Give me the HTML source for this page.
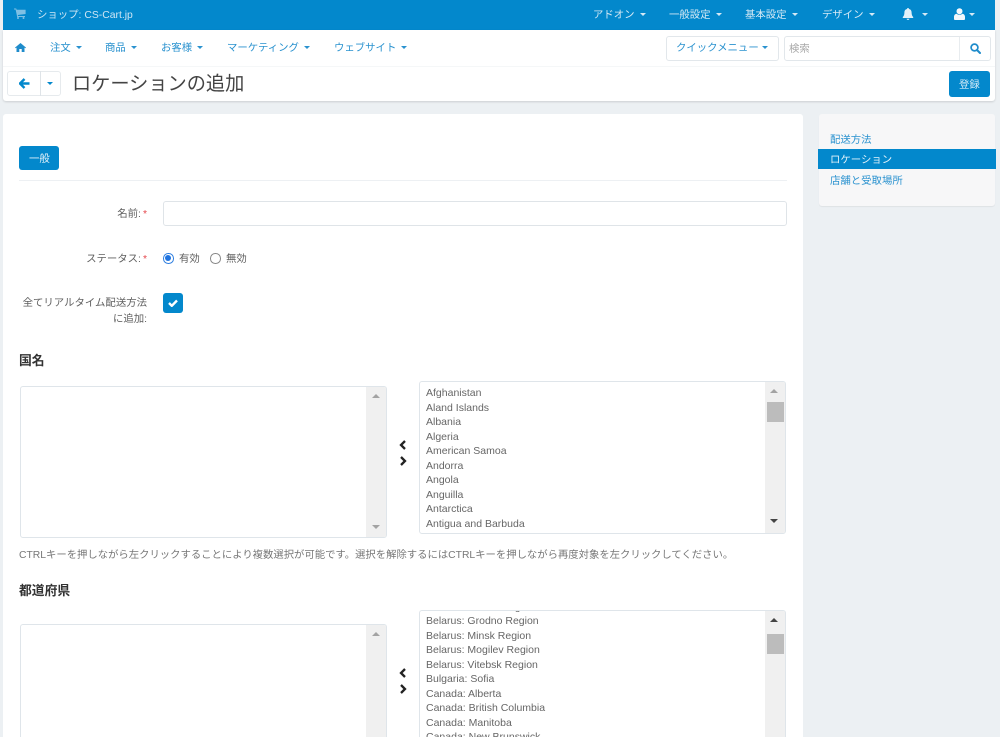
<!DOCTYPE html>
<html lang="ja">
<head>
<meta charset="utf-8">
<title>ロケーションの追加</title>
<style>
html,body{margin:0;padding:0;width:1000px;height:737px;overflow:hidden;background:#ecf0f3}
body{position:relative;font-family:"Liberation Sans","Noto Sans CJK JP",sans-serif;font-size:10.4px;color:#5f5f5f}
.a{position:absolute;white-space:nowrap;line-height:16px}
.box{position:absolute;box-sizing:border-box}
.top{color:#d5e9f5}
.nav{color:#2a92cf}
.car{display:inline-block;width:0;height:0;border-left:3px solid transparent;border-right:3px solid transparent;border-top:3px solid currentColor;vertical-align:2px;margin-left:5px}
.lab{text-align:right;color:#5f5f5f;right:853px}
.req{color:#e5484d;margin-left:2px}
.h{font-weight:bold;font-size:12.8px;color:#333}
.sel{position:absolute;box-sizing:border-box;background:#fff;border:1px solid #dfe5ea;border-radius:3px;overflow:hidden}
.sb{position:absolute;right:0;top:0;bottom:0;width:20px;background:#f0f0f0}
.opt{position:absolute;left:6px;line-height:14.5px;font-size:10.5px;color:#666;white-space:nowrap}
.tu,.td{position:absolute;width:0;height:0;border-left:4.5px solid transparent;border-right:4.5px solid transparent}
.tu{border-bottom:4.5px solid #a3a3a3}
.td{border-top:4.5px solid #a3a3a3}
.th{position:absolute;width:17px;height:20px;background:#bcbcbc}
svg{position:absolute;display:block}
</style>
</head>
<body>
<!-- top bar -->
<div class="box" style="left:3px;top:0;width:992px;height:30px;background:#0388cc"></div>
<svg style="left:14px;top:8px" width="12" height="11" viewBox="0 0 12 11"><path d="M0 0.5h2.2l.4 1.3h9v4.2l-7.8 1 .2 1h7v1H3.2L1.6 1.500H0z" fill="#7fc0e4"/><circle cx="4" cy="10" r="1" fill="#7fc0e4"/><circle cx="9.5" cy="10" r="1" fill="#7fc0e4"/></svg>
<div class="a top" style="left:37px;top:8px;color:#cfe6f4">ショップ: CS-Cart.jp</div>
<div class="a top" style="left:593px;top:8px">アドオン<span class="car"></span></div>
<div class="a top" style="left:669px;top:8px">一般設定<span class="car"></span></div>
<div class="a top" style="left:745px;top:8px">基本設定<span class="car"></span></div>
<div class="a top" style="left:822px;top:8px">デザイン<span class="car"></span></div>
<svg style="left:902px;top:8px" width="12" height="12" viewBox="0 0 12 12"><path d="M6 0c.6 0 1 .4 1 1 2 .4 2.600 2 2.600 3.600 0 2 .6 3.400 1.600 4.400v1H.8V9c1-1 1.600-2.400 1.600-4.400C2.400 3 3 1.400 5 1c0-.6.4-1 1-1zM4.600 10.800h2.800C7.300 11.500 6.700 12 6 12s-1.300-.5-1.400-1.200z" fill="#e3f1f9"/></svg>
<div class="a top" style="left:917px;top:8px"><span class="car"></span></div>
<svg style="left:954px;top:8px" width="11" height="12" viewBox="0 0 11 12"><circle cx="5.500" cy="3.200" r="3" fill="#f2f8fc"/><path d="M0 11V9c0-1.800 1-3 2.600-3.200.8.700 1.800 1 2.900 1s2.100-.3 2.900-1C10 6 11 7.200 11 9v2c0 .5-.4 1-1 1H1c-.6 0-1-.5-1-1z" fill="#f2f8fc"/></svg>
<div class="a top" style="left:964px;top:8px"><span class="car"></span></div>

<!-- nav panel -->
<div class="box" style="left:3px;top:30px;width:992px;height:71px;background:#fff;border-radius:0 0 3px 3px;box-shadow:0 1px 2px rgba(0,0,0,.14)"></div>
<div class="box" style="left:3px;top:66px;width:992px;height:1px;background:#f5f7f8"></div>
<svg style="left:15px;top:43px" width="11" height="9" viewBox="0 0 11 9"><path d="M5.500 0L11 4.600l-.6.700-.9-.7V9H6.700V6H4.300v3H1.500V4.600l-.9.700L0 4.600 5.500 0z" fill="#1f8ccb"/></svg>
<div class="a nav" style="left:50px;top:41px">注文<span class="car"></span></div>
<div class="a nav" style="left:105px;top:41px">商品<span class="car"></span></div>
<div class="a nav" style="left:161px;top:41px">お客様<span class="car"></span></div>
<div class="a nav" style="left:227px;top:41px">マーケティング<span class="car"></span></div>
<div class="a nav" style="left:334px;top:41px">ウェブサイト<span class="car"></span></div>

<div class="box" style="left:666px;top:36px;width:113px;height:25px;border:1px solid #e2e7eb;border-radius:3px"></div>
<div class="a nav" style="left:676px;top:41px">クイックメニュー<span class="car" style="margin-left:3px;border-left-width:3px;border-right-width:3px;border-top-width:3.500px"></span></div>
<div class="box" style="left:784px;top:36px;width:207px;height:25px;border:1px solid #e2e7eb;border-radius:3px"></div>
<div class="box" style="left:959px;top:37px;width:1px;height:23px;background:#e8ecef"></div>
<div class="a" style="left:789px;top:42px;color:#a8a8a8;font-size:10.4px">検索</div>
<svg style="left:970px;top:43px" width="11" height="11" viewBox="0 0 11 11"><circle cx="4.500" cy="4.500" r="3.400" fill="none" stroke="#1f8ccb" stroke-width="1.700"/><path d="M7 7l3 3" stroke="#1f8ccb" stroke-width="2" stroke-linecap="round"/></svg>

<!-- title row -->
<div class="box" style="left:7px;top:71px;width:54px;height:25px;border:1px solid #e6eaed;border-radius:3px"></div>
<div class="box" style="left:40px;top:71px;width:1px;height:25px;background:#dfe4e8"></div>
<svg style="left:19px;top:78px" width="11" height="11" viewBox="0 0 11 11"><path d="M5.500 1L1 5.500 5.500 10M1.500 5.500H10.500" fill="none" stroke="#0388cc" stroke-width="2.400"/></svg>
<div class="box" style="left:47px;top:82px;width:0;height:0;border-left:3px solid transparent;border-right:3px solid transparent;border-top:3px solid #0388cc"></div>
<div class="a" style="left:72px;top:72px;font-size:19.2px;line-height:26px;color:#444">ロケーションの追加</div>
<div class="box" style="left:949px;top:71px;width:41px;height:26px;background:#0388cc;border-radius:3px"></div>
<div class="a" style="left:959px;top:78px;color:#d8edf8">登録</div>

<!-- main panel -->
<div class="box" style="left:3px;top:114px;width:800px;height:623px;background:#fff;border-radius:3px 3px 0 0"></div>
<div class="box" style="left:19px;top:146px;width:40px;height:24px;background:#0388cc;border-radius:3px"></div>
<div class="a" style="left:29px;top:152px;color:#e3f2fa">一般</div>
<div class="box" style="left:19px;top:180px;width:768px;height:1px;background:#edf0f3"></div>

<div class="a lab" style="top:207px">名前:<span class="req">*</span></div>
<div class="box" style="left:163px;top:201px;width:624px;height:25px;border:1px solid #dfe4e8;border-radius:3px;background:#fff"></div>

<div class="a lab" style="top:252px">ステータス:<span class="req">*</span></div>
<div class="box" style="left:163px;top:253px;width:10.500px;height:10.500px;border:1px solid #2f7fe0;border-radius:50%"></div>
<div class="box" style="left:165.250px;top:255.250px;width:6px;height:6px;background:#1f74e0;border-radius:50%"></div>
<div class="a" style="left:179px;top:252px">有効</div>
<div class="box" style="left:210px;top:253px;width:10.500px;height:10.500px;border:1px solid #888;border-radius:50%"></div>
<div class="a" style="left:226px;top:252px">無効</div>

<div class="a lab" style="top:296px">全てリアルタイム配送方法</div>
<div class="a lab" style="top:312px">に追加:</div>
<div class="box" style="left:163px;top:293px;width:20px;height:20px;background:#0388cc;border-radius:3px"></div>
<svg style="left:168px;top:299px" width="10" height="8" viewBox="0 0 10 8"><path d="M1 4l2.800 2.800L9 1.500" fill="none" stroke="#fff" stroke-width="2.400"/></svg>

<div class="a h" style="left:19px;top:353px">国名</div>

<!-- countries left -->
<div class="sel" style="left:20px;top:386px;width:367px;height:152px">
  <div class="sb"></div><div class="tu" style="left:351px;top:7px"></div><div class="td" style="left:351px;top:138px"></div>
</div>
<svg style="left:398px;top:439px" width="9" height="28" viewBox="0 0 9 28"><path d="M7 2L3 6l4 4" fill="none" stroke="#222" stroke-width="2.300"/><path d="M3 18l4 4-4 4" fill="none" stroke="#222" stroke-width="2.300"/></svg>
<!-- countries right -->
<div class="sel" style="left:419px;top:381px;width:367px;height:153px">
  <div class="opt" style="top:4px">Afghanistan</div>
  <div class="opt" style="top:18.500px">Aland Islands</div>
  <div class="opt" style="top:33px">Albania</div>
  <div class="opt" style="top:47.500px">Algeria</div>
  <div class="opt" style="top:62px">American Samoa</div>
  <div class="opt" style="top:76.500px">Andorra</div>
  <div class="opt" style="top:91px">Angola</div>
  <div class="opt" style="top:105.500px">Anguilla</div>
  <div class="opt" style="top:120px">Antarctica</div>
  <div class="opt" style="top:134.500px">Antigua and Barbuda</div>
  <div class="sb"></div><div class="tu" style="left:349.500px;top:7px"></div><div class="th" style="left:347px;top:20px"></div><div class="td" style="left:349.500px;top:137px;border-top-color:#444"></div>
</div>

<div class="a" style="left:19px;top:548px;font-size:10.35px;color:#777">CTRLキーを押しながら左クリックすることにより複数選択が可能です。選択を解除するにはCTRLキーを押しながら再度対象を左クリックしてください。</div>

<div class="a h" style="left:19px;top:583px">都道府県</div>

<!-- states left -->
<div class="sel" style="left:20px;top:624px;width:367px;height:113px;border-bottom:0;border-radius:3px 3px 0 0">
  <div class="sb"></div><div class="tu" style="left:351px;top:7px"></div>
</div>
<svg style="left:398px;top:667px" width="9" height="28" viewBox="0 0 9 28"><path d="M7 2L3 6l4 4" fill="none" stroke="#222" stroke-width="2.300"/><path d="M3 18l4 4-4 4" fill="none" stroke="#222" stroke-width="2.300"/></svg>
<!-- states right -->
<div class="sel" style="left:419px;top:610px;width:367px;height:127px;border-bottom:0;border-radius:3px 3px 0 0">
  <div class="opt" style="top:-11px">Belarus: Gomel Region</div>
  <div class="opt" style="top:3px">Belarus: Grodno Region</div>
  <div class="opt" style="top:17.500px">Belarus: Minsk Region</div>
  <div class="opt" style="top:32px">Belarus: Mogilev Region</div>
  <div class="opt" style="top:46.500px">Belarus: Vitebsk Region</div>
  <div class="opt" style="top:61px">Bulgaria: Sofia</div>
  <div class="opt" style="top:75.500px">Canada: Alberta</div>
  <div class="opt" style="top:90px">Canada: British Columbia</div>
  <div class="opt" style="top:104.500px">Canada: Manitoba</div>
  <div class="opt" style="top:119px">Canada: New Brunswick</div>
  <div class="sb"></div><div class="tu" style="left:349.500px;top:7px;border-bottom-color:#444"></div><div class="th" style="left:347px;top:23px"></div>
</div>

<!-- sidebar -->
<div class="box" style="left:819px;top:114px;width:176px;height:92px;background:#f7f7f8;border-radius:3px;box-shadow:0 1px 1px rgba(0,0,0,.06)"></div>
<div class="a" style="left:830px;top:133px;color:#2a92cf">配送方法</div>
<div class="box" style="left:818px;top:149px;width:178px;height:20px;background:#0388cc"></div>
<div class="a" style="left:830px;top:153px;color:#e3f2fa">ロケーション</div>
<div class="a" style="left:830px;top:174px;color:#2a92cf">店舗と受取場所</div>
</body>
</html>
